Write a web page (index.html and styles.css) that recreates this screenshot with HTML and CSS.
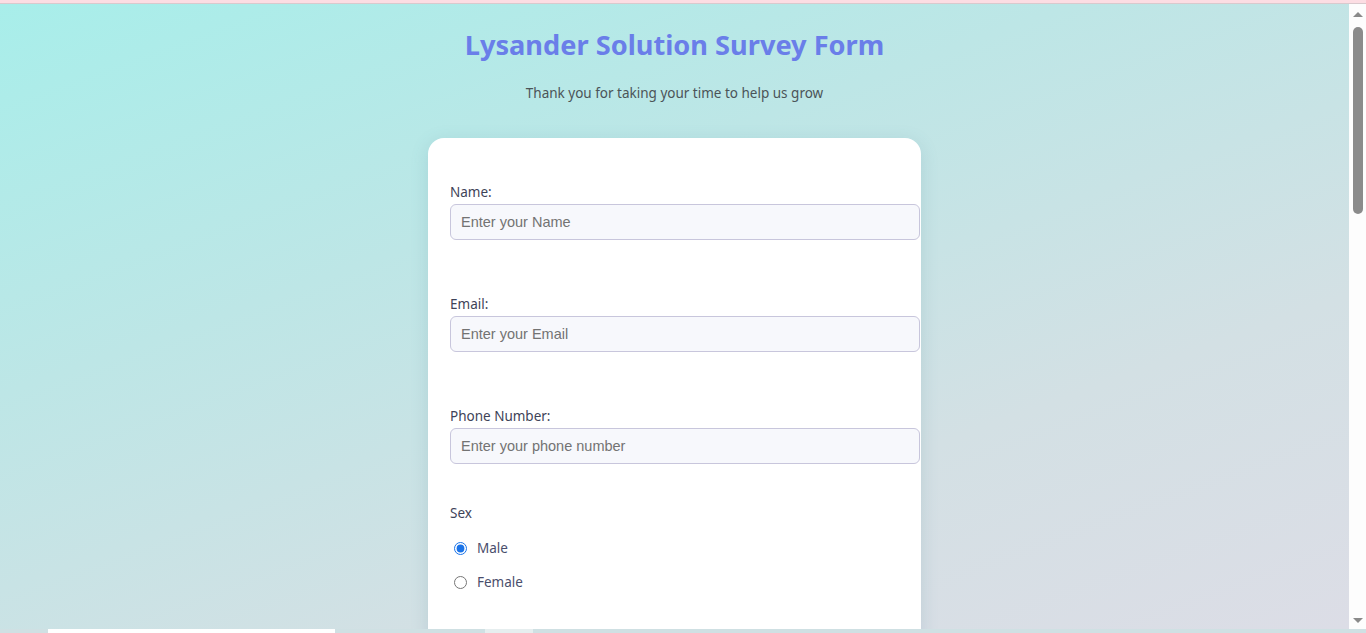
FILE: index.html
```html
<!DOCTYPE html>
<html lang="en">
<head>
<meta charset="utf-8">
<title>Lysander Solution Survey Form</title>
<link rel="stylesheet" href="styles.css">
</head>
<body>
<div class="topbar"></div>
<div class="frame">
  <main class="viewport">
    <header class="header">
      <h1 class="title">Lysander Solution Survey Form</h1>
      <p class="subtitle">Thank you for taking your time to help us grow</p>
    </header>
    <form class="card">
      <div class="group">
        <label class="label" for="name">Name:</label>
        <input class="input" id="name" type="text" placeholder="Enter your Name">
      </div>
      <div class="group">
        <label class="label" for="email">Email:</label>
        <input class="input" id="email" type="email" placeholder="Enter your Email">
      </div>
      <div class="group group-last">
        <label class="label" for="phone">Phone Number:</label>
        <input class="input" id="phone" type="tel" placeholder="Enter your phone number">
      </div>
      <div class="sex">
        <p class="label sex-label">Sex</p>
        <label class="radio-row"><input class="radio" type="radio" name="sex" checked> Male</label>
        <label class="radio-row"><input class="radio" type="radio" name="sex"> Female</label>
      </div>
    </form>
  </main>
  <div class="scrollbar">
    <div class="arrow arrow-up"></div>
    <div class="thumb"></div>
    <div class="track"></div>
    <div class="arrow arrow-down"></div>
  </div>
</div>
<div class="bottombar">
  <div class="bb-gap1"></div>
  <div class="bb-white"></div>
  <div class="bb-gap2"></div>
  <div class="bb-light"></div>
</div>
</body>
</html>
```

FILE: styles.css
```css
html, body {
  margin: 0;
  padding: 0;
  height: 633px;
  overflow: hidden;
}
body {
  display: flex;
  flex-direction: column;
  font-family: "Noto Sans", "Open Sans", sans-serif;
}
.topbar {
  height: 4px;
  flex: none;
  background: #fcdde3;
  border-bottom: 1px solid #d9c9cd;
  box-sizing: border-box;
}
.frame {
  flex: 1;
  display: flex;
  min-height: 0;
}
.viewport {
  flex: 1;
  overflow: hidden;
  background: linear-gradient(160deg, #a8eeea 0%, #bde6e6 35%, #d3e0e4 70%, #dcdde6 100%);
  display: flex;
  flex-direction: column;
  align-items: center;
}
.header {
  text-align: center;
}
.title {
  margin: 22px 0 0;
  font-size: 27.2px;
  line-height: 38px;
  font-weight: 700;
  color: #6a7ee9;
  letter-spacing: 0;
}
.subtitle {
  margin: 19px 0 0;
  font-size: 13.5px;
  line-height: 20px;
  color: #4b5458;
}
.card {
  margin-top: 35px;
  width: 493px;
  box-sizing: border-box;
  background: #fff;
  border-radius: 16px;
  padding: 44px 22px 40px;
  box-shadow: 0 4px 18px rgba(80, 130, 150, 0.18);
  flex: none;
}
.group {
  margin-bottom: 54px;
}
.group-last {
  margin-bottom: 39px;
}
.label {
  display: block;
  margin: 0 0 2px;
  font-size: 13.5px;
  line-height: 20px;
  color: #3e4358;
}
.input {
  display: block;
  width: calc(100% + 21px);
  height: 36px;
  box-sizing: border-box;
  margin: 0;
  padding: 0 10px;
  border: 1px solid #c8c6dc;
  border-radius: 6px;
  background: #f7f8fc;
  font-family: "Liberation Sans", Arial, sans-serif;
  font-size: 14.5px;
  color: #333;
  outline: none;
}
.input::placeholder {
  color: #737373;
}
.sex-label {
  margin-bottom: 15px;
}
.radio-row {
  display: flex;
  align-items: center;
  height: 20px;
  margin-bottom: 14px;
  font-size: 13.5px;
  color: #4a4e6c;
}
.radio {
  margin: 0 10px 0 4px;
  width: 13px;
  height: 13px;
  accent-color: #1a73e8;
}
.scrollbar {
  width: 17px;
  flex: none;
  background: #fdfdfd;
  display: flex;
  flex-direction: column;
  align-items: center;
}
.arrow {
  width: 0;
  height: 0;
  border-left: 5px solid transparent;
  border-right: 5px solid transparent;
  flex: none;
}
.arrow-up {
  margin-top: 8px;
  border-bottom: 5px solid #8a8a8a;
}
.arrow-down {
  margin-bottom: 6px;
  border-top: 5px solid #8a8a8a;
}
.thumb {
  margin-top: 10px;
  width: 10px;
  height: 187px;
  border-radius: 5px;
  background: #8b8b8b;
  flex: none;
}
.track {
  flex: 1;
}
.bottombar {
  height: 4px;
  flex: none;
  display: flex;
  background: #cfe0e3;
}
.bb-gap1 { width: 48px; }
.bb-white { width: 287px; background: #ffffff; }
.bb-gap2 { width: 150px; }
.bb-light { width: 48px; background: #e6eeef; }
```
